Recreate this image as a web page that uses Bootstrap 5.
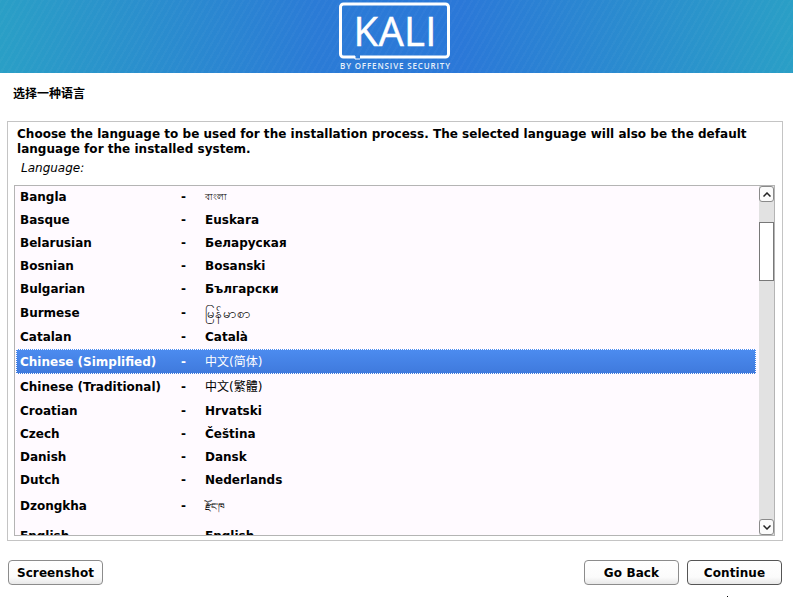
<!DOCTYPE html>
<html lang="en">

<head>
    <meta charset="UTF-8">
    <meta name="viewport" content="width=device-width, initial-scale=1.0">
    <title>Kali Installer</title>
    <link href="https://cdn.jsdelivr.net/npm/bootstrap@5.3.3/dist/css/bootstrap.min.css" rel="stylesheet">
    <script src="https://cdn.jsdelivr.net/npm/bootstrap@5.3.3/dist/js/bootstrap.bundle.min.js"></script>
    <style>
        body {
            width: 793px;
            height: 598px;
            overflow: hidden;
            background-color: #ffffff;
            color: #000000;
            font-family: "DejaVu Sans", "Noto Sans CJK SC", sans-serif;
            font-size: 12px;
            line-height: 15px;
        }

        .kali-banner {
            height: 73px;
            background:
                repeating-linear-gradient(120deg, rgba(255, 255, 255, .025) 0 2px, rgba(255, 255, 255, 0) 2px 6px),
                linear-gradient(90deg, #2a9fc6 0%, #2b7bd6 40%, #2b78d8 58%, #2a9fc6 100%);
        }

        .kali-banner svg {
            display: block;
        }

        .step-title {
            height: 48px;
            padding: 13px 0 0 13px;
            font-size: 12px;
            font-weight: 700;
            line-height: 16px;
        }

        .install-panel {
            height: 420px;
            margin: 0 10px 0 7px;
            padding: 5px 7px 3px 6px;
            border: 1px solid #c4c4c4;
        }

        .intro-text {
            padding-left: 3px;
            font-weight: 700;
            letter-spacing: .025px;
        }

        .field-label {
            height: 28px;
            padding: 4px 0 0 7px;
            font-style: italic;
        }

        .lang-box {
            height: 351px;
            border: 1px solid #b4b4b4;
            background-color: #fffaff;
        }

        .lang-rows {
            width: 741px;
            padding: 1px 0 0 1px;
        }

        .lang-row {
            height: 23px;
            padding-left: 4px;
            align-items: center;
            font-weight: 700;
            white-space: nowrap;
        }

        .lang-row.row-first {
            height: 22px;
            padding-bottom: 1px;
        }

        .lang-row.row-tall {
            height: 25px;
            padding-bottom: 1px;
        }

        .lang-row.row-short {
            height: 23px;
        }

        .lang-row.row-mid {
            height: 26px;
            padding-top: 1px;
        }

        .lang-row.row-taller {
            height: 28px;
        }

        .lang-row.row-cut {
            height: 16px;
            padding-top: 16px;
        }

        .lang-row.row-on {
            height: 25px;
            padding-top: 1px;
            color: #ffffff;
            outline: 1px dotted #ffffff;
            outline-offset: -1px;
            background: linear-gradient(180deg, #4c8cf0, #3f79dc);
        }

        .name-cell {
            width: 161px;
        }

        .dash-cell {
            width: 24px;
        }

        .thin-cell {
            font-weight: 400;
        }

        .script-bn {
            font-size: 8.5px;
        }

        .script-my {
            font-size: 13px;
        }

        .script-dz {
            font-size: 9.5px;
        }

        .scroll-rail {
            width: 15px;
            background-color: #e2e2e2;
        }

        .scroll-btn {
            height: 16px;
            border: 1px solid #8a8a8a;
            border-radius: 3px;
            background-color: #fbfbfb;
        }

        .scroll-thumb {
            height: 59px;
            margin-top: 20px;
            border: 1px solid #787878;
            background-color: #ffffff;
        }

        .bottom-bar {
            padding: 19px 11px 0 8px;
        }

        .setup-btn {
            width: 95px;
            height: 25px;
            padding: 0;
            border: 1px solid #8c8c8c;
            border-radius: 4px;
            color: #000000;
            background: linear-gradient(180deg, #ffffff 0%, #fbfbfb 70%, #e8e8e8 100%);
            font-size: 12px;
            font-weight: 700;
            letter-spacing: .1px;
        }

        .setup-btn.btn-main {
            border-color: #555555;
        }

        .pointer-dot {
            position: absolute;
            left: 727px;
            top: 596px;
            width: 1px;
            height: 1px;
            background-color: #000000;
        }
    </style>
</head>

<body class="position-relative">
    <header class="kali-banner d-flex justify-content-center">
        <svg width="115" height="73" viewBox="0 0 115 73">
            <path d="M16 57H4.500a3 3 0 0 1-3-3V7a3 3 0 0 1 3-3h102a3 3 0 0 1 3 3v47a3 3 0 0 1-3 3H21" fill="none" stroke="#ffffff" stroke-width="3" />
            <path d="M16 56v3h5" fill="none" stroke="#ffffff" stroke-width="1" />
            <text x="56" y="46" text-anchor="middle" fill="#ffffff" font-family="Open Sans" font-size="40" textLength="83" stroke="#ffffff" stroke-width=".5">KALI</text>
            <text x="56" y="69" text-anchor="middle" fill="#e6f0fa" font-family="Open Sans" font-size="8" font-weight="600" textLength="110">BY OFFENSIVE SECURITY</text>
        </svg>
    </header>

    <div class="step-title">选择一种语言</div>

    <main class="install-panel d-flex flex-column">
        <div class="intro-text">Choose the language to be used for the installation process. The selected language will also be the default language for the installed system.</div>
        <div class="field-label">Language:</div>
        <div class="lang-box d-flex justify-content-between overflow-hidden">
            <div class="lang-rows">
                <div class="lang-row row-first d-flex"><span class="name-cell">Bangla</span><span class="dash-cell">-</span><span class="thin-cell script-bn">বাংলা</span></div>
                <div class="lang-row d-flex"><span class="name-cell">Basque</span><span class="dash-cell">-</span><span>Euskara</span></div>
                <div class="lang-row d-flex"><span class="name-cell">Belarusian</span><span class="dash-cell">-</span><span>Беларуская</span></div>
                <div class="lang-row d-flex"><span class="name-cell">Bosnian</span><span class="dash-cell">-</span><span>Bosanski</span></div>
                <div class="lang-row d-flex"><span class="name-cell">Bulgarian</span><span class="dash-cell">-</span><span>Български</span></div>
                <div class="lang-row row-tall d-flex"><span class="name-cell">Burmese</span><span class="dash-cell">-</span><span class="thin-cell script-my">မြန်မာစာ</span></div>
                <div class="lang-row row-short d-flex"><span class="name-cell">Catalan</span><span class="dash-cell">-</span><span>Català</span></div>
                <div class="lang-row row-on d-flex"><span class="name-cell">Chinese (Simplified)</span><span class="dash-cell">-</span><span class="thin-cell">中文(简体)</span></div>
                <div class="lang-row row-mid d-flex"><span class="name-cell">Chinese (Traditional)</span><span class="dash-cell">-</span><span class="thin-cell">中文(繁體)</span></div>
                <div class="lang-row d-flex"><span class="name-cell">Croatian</span><span class="dash-cell">-</span><span>Hrvatski</span></div>
                <div class="lang-row d-flex"><span class="name-cell">Czech</span><span class="dash-cell">-</span><span>Čeština</span></div>
                <div class="lang-row d-flex"><span class="name-cell">Danish</span><span class="dash-cell">-</span><span>Dansk</span></div>
                <div class="lang-row d-flex"><span class="name-cell">Dutch</span><span class="dash-cell">-</span><span>Nederlands</span></div>
                <div class="lang-row row-taller d-flex"><span class="name-cell">Dzongkha</span><span class="dash-cell">-</span><span class="thin-cell script-dz">རྫོང་ཁ</span></div>
                <div class="lang-row row-cut d-flex"><span class="name-cell">English</span><span class="dash-cell"></span><span>English</span></div>
            </div>
            <div class="scroll-rail d-flex flex-column">
                <div class="scroll-btn d-flex justify-content-center align-items-center">
                    <svg width="8" height="5" viewBox="0 0 8 5"><path d="M.5 4.500 4 1l3.500 3.500" fill="none" stroke="#222222" stroke-width="1.500" /></svg>
                </div>
                <div class="scroll-thumb"></div>
                <div class="flex-grow-1"></div>
                <div class="scroll-btn d-flex justify-content-center align-items-center">
                    <svg width="8" height="5" viewBox="0 0 8 5"><path d="M.5.500 4 4 7.500.5" fill="none" stroke="#222222" stroke-width="1.500" /></svg>
                </div>
            </div>
        </div>
    </main>

    <footer class="bottom-bar d-flex">
        <button type="button" class="btn setup-btn">Screenshot</button>
        <button type="button" class="btn setup-btn ms-auto">Go Back</button>
        <button type="button" class="btn setup-btn btn-main ms-2">Continue</button>
    </footer>
    <span class="pointer-dot"></span>
</body>

</html>
